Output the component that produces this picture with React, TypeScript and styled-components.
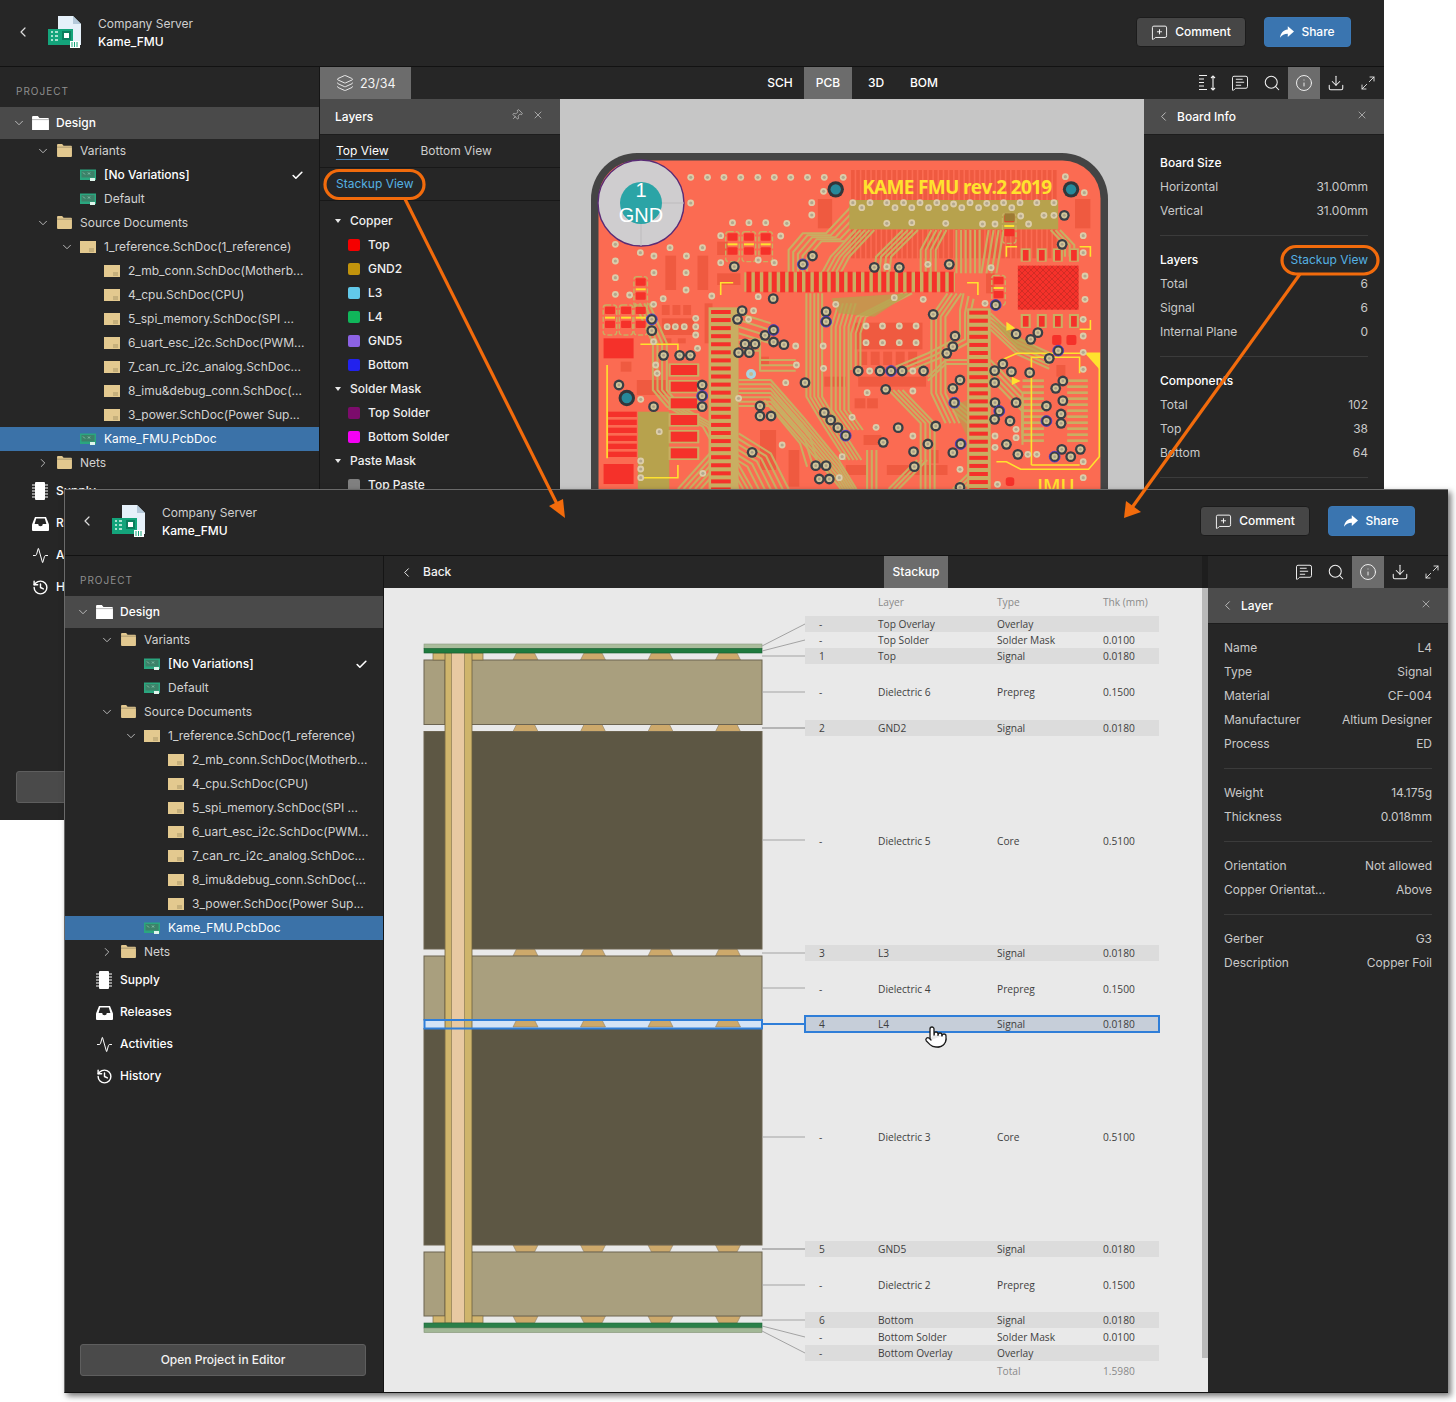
import React from 'react';
import styled, { createGlobalStyle } from 'styled-components';
import {
  Activity,
  Check,
  ChevronDown,
  ChevronLeft,
  ChevronRight,
  Download,
  History,
  Info,
  Layers,
  Maximize2,
  MessageSquarePlus,
  MessageSquareText,
  Pin,
  Pointer,
  Search,
  X as CloseIcon,
} from 'lucide-react';

const GlobalStyle = createGlobalStyle`
  html, body { margin: 0; padding: 0; background: #fff; }
  body { font-family: Inter, "Liberation Sans", sans-serif; font-size: 12px; line-height: 13px; color: #d4d4d4; }
  * { box-sizing: border-box; }
`;

const Page = styled.div`
  position: relative;
  width: 1456px;
  height: 1402px;
  overflow: hidden;
  background: #fff;
`;

const Window = styled.div<{ $x: number; $y: number; $h: number; $raised?: boolean }>`
  position: absolute;
  left: ${(p) => p.$x}px;
  top: ${(p) => p.$y}px;
  width: 1384px;
  height: ${(p) => p.$h}px;
  display: flex;
  flex-direction: column;
  background: #262626;
  overflow: ${(p) => (p.$raised ? 'visible' : 'hidden')};
  box-shadow: ${(p) => (p.$raised ? '3px 3px 6px rgba(0,0,0,.55)' : 'none')};
  &::after {
    content: '';
    display: ${(p) => (p.$raised ? 'block' : 'none')};
    position: absolute;
    inset: 0;
    border-top: 1px solid #6a6a6a;
    border-left: 1px solid #6a6a6a;
    border-bottom: 1px solid #111;
    pointer-events: none;
  }
`;

/* row text sits a pixel above the icon centre line */
const Label = styled.span`
  display: block;
  margin-bottom: 2px;
`;

const Header = styled.header`
  flex: 0 0 67px;
  display: flex;
  align-items: center;
  padding: 0 33px 2px 15px;
  background: #262626;
  border-bottom: 1px solid #121212;
`;

const BackBtn = styled.span`
  display: flex;
  width: 33px;
  color: #ddd;
`;

const ProjectTitle = styled.div`
  margin-left: 16px;
  margin-right: auto;
  display: flex;
  flex-direction: column;
  gap: 3px;
  line-height: 15px;
  font-size: 12px;
  color: #cfcfcf;
  b {
    color: #fff;
    font-weight: 500;
  }
`;

const HeaderButton = styled.button<{ $primary?: boolean }>`
  height: 30px;
  width: ${(p) => (p.$primary ? 87 : 110)}px;
  margin-left: ${(p) => (p.$primary ? 18 : 0)}px;
  display: flex;
  align-items: center;
  justify-content: center;
  gap: 7px;
  border-radius: 4px;
  border: 1px solid ${(p) => (p.$primary ? '#3b78b5' : '#1c1c1c')};
  background: ${(p) => (p.$primary ? '#3a75b0' : '#464646')};
  color: #fff;
  font: 500 12px/13px Inter, sans-serif;
`;

const Body = styled.div`
  flex: 1;
  min-height: 0;
  display: flex;
`;

const Sidebar = styled.aside`
  flex: 0 0 320px;
  width: 320px;
  min-width: 0;
  display: flex;
  flex-direction: column;
  border-right: 1px solid #151515;
  background: #262626;
`;

const SectionLabel = styled.div`
  height: 40px;
  padding: 18px 0 0 16px;
  font-size: 10px;
  line-height: 13px;
  letter-spacing: 1px;
  color: #8e8e8e;
`;

const TreeRow = styled.div<{ $depth: number; $top?: boolean; $selected?: boolean; $strong?: boolean }>`
  height: ${(p) => (p.$top ? 32 : 24)}px;
  padding-left: ${(p) => 8 + p.$depth * 24}px;
  padding-right: 15px;
  display: grid;
  grid-template-columns: 24px 24px 1fr auto;
  align-items: center;
  background: ${(p) => (p.$top ? '#4a4a4a' : p.$selected ? '#3b72a8' : 'transparent')};
  color: ${(p) => (p.$strong || p.$selected ? '#fff' : '#d2d2d2')};
  font-weight: ${(p) => (p.$strong ? 500 : 400)};
  font-size: 12px;
  white-space: nowrap;
`;

const ChevronSlot = styled.span`
  display: flex;
  align-items: center;
  padding-left: 4px;
  color: #c8c8c8;
`;

const Slot = styled.span<{ $inset?: boolean }>`
  display: flex;
  align-items: center;
  padding-left: ${(p) => (p.$inset ? 1 : 0)}px;
`;

const NavRow = styled.div`
  height: 32px;
  padding-left: 32px;
  display: grid;
  grid-template-columns: 24px 1fr;
  align-items: center;
  color: #fff;
  font-weight: 500;
  font-size: 12px;
`;

const OpenButton = styled.button`
  margin: auto 17px 17px 16px;
  height: 32px;
  flex: 0 0 32px;
  padding: 0 0 2px;
  border-radius: 3px;
  border: 1px solid #5e5e5e;
  background: #4a4a4a;
  color: #f2f2f2;
  font: 500 12px/13px Inter, sans-serif;
`;

const Main = styled.div`
  flex: 1;
  min-width: 0;
  display: flex;
  flex-direction: column;
`;

const Toolbar = styled.div`
  flex: 0 0 32px;
  display: grid;
  grid-template-columns: 1fr auto 1fr;
  background: #262626;
`;

const CountTab = styled.div`
  width: 91px;
  display: flex;
  align-items: center;
  gap: 6px;
  padding-left: 16px;
  background: #6c6c6c;
  color: #f4f4f4;
  font-size: 12.5px;
`;

const ViewTabs = styled.div`
  display: flex;
`;

const ViewTab = styled.div<{ $active?: boolean }>`
  width: 48px;
  display: flex;
  align-items: center;
  justify-content: center;
  padding-bottom: 2px;
  font-size: 12px;
  font-weight: 500;
  color: #fff;
  background: ${(p) => (p.$active ? '#6c6c6c' : 'transparent')};
`;

const ToolIcons = styled.div`
  display: flex;
  justify-content: flex-end;
  height: 32px;
  flex: 0 0 32px;
`;

const ToolIcon = styled.span<{ $active?: boolean }>`
  width: 32px;
  display: flex;
  align-items: center;
  justify-content: center;
  color: #f0f0f0;
  background: ${(p) => (p.$active ? '#6c6c6c' : 'transparent')};
`;

const Workspace = styled.div`
  flex: 1;
  min-height: 0;
  display: flex;
`;

const Panel = styled.section`
  flex: 0 0 240px;
  width: 240px;
  display: flex;
  flex-direction: column;
  background: #262626;
`;

const PanelHeader = styled.div`
  flex: 0 0 36px;
  display: flex;
  align-items: center;
  padding: 0 16px;
  background: #4c4c4c;
  border-bottom: 1px solid #1d1d1d;
  color: #fff;
  font-size: 12px;
  font-weight: 500;
`;

const PanelTitle = styled.span<{ $indent?: boolean }>`
  margin-left: ${(p) => (p.$indent ? 6 : -1)}px;
`;

const HeaderSpacer = styled.span`
  flex: 1;
`;

const HeaderIcon = styled.span<{ $back?: boolean; $gap?: boolean }>`
  display: flex;
  color: #d4d4d4;
  margin-left: ${(p) => (p.$back ? -4 : 0)}px;
  margin-right: ${(p) => (p.$gap ? 9 : 0)}px;
  margin-bottom: ${(p) => (p.$back ? 0 : 3)}px;
  transform: ${(p) => (p.$gap ? 'rotate(45deg)' : 'none')};
`;

const PanelTabs = styled.div`
  height: 33px;
  display: flex;
  gap: 32px;
  padding: 0 16px;
  border-bottom: 1px solid #181818;
`;

const PanelTab = styled.div<{ $active?: boolean }>`
  height: 25px;
  padding-top: 8px;
  line-height: 15px;
  font-size: 12px;
  color: ${(p) => (p.$active ? '#fff' : '#cdcdcd')};
  border-bottom: 1px solid ${(p) => (p.$active ? '#4b86bd' : 'transparent')};
`;

const LinkRow = styled.div`
  height: 33px;
  display: flex;
  align-items: center;
  padding-left: 16px;
  border-bottom: 1px solid #181818;
`;

const Link = styled.span`
  display: block;
  margin-bottom: 2px;
  color: #55b1e2;
  font-size: 12px;
  font-weight: 400;
`;

const LayerList = styled.div`
  padding-top: 8px;
`;

const LayerGroup = styled.div`
  height: 24px;
  display: flex;
  align-items: center;
  padding-left: 15px;
  gap: 9px;
  color: #f0f0f0;
  font-size: 12px;
  font-weight: 500;
  &::before {
    content: '';
    border-left: 3px solid transparent;
    border-right: 3px solid transparent;
    border-top: 4px solid #e8e8e8;
  }
`;

const LayerItem = styled.div`
  height: 24px;
  display: flex;
  align-items: center;
  padding-left: 28px;
  gap: 8px;
  color: #f0f0f0;
  font-size: 12px;
  font-weight: 500;
`;

const Swatch = styled.span<{ $color: string }>`
  width: 12px;
  height: 12px;
  border-radius: 2px;
  background: ${(p) => p.$color};
`;

const Viewer = styled.div`
  flex: 1;
  min-width: 0;
  background: #c6c6c6;
  overflow: hidden;
`;

const InfoBody = styled.div<{ $top: number }>`
  padding: ${(p) => p.$top}px 16px 0;
`;

const InfoSection = styled.div<{ $plain?: boolean }>`
  padding: 12px 0;
  border-bottom: 1px solid ${(p) => (p.$plain ? 'transparent' : '#3b3b3b')};
`;

const InfoRow = styled.div<{ $head?: boolean }>`
  height: 24px;
  display: flex;
  align-items: center;
  justify-content: space-between;
  font-size: 12px;
  color: ${(p) => (p.$head ? '#fff' : '#c9c9c9')};
  font-weight: ${(p) => (p.$head ? 500 : 400)};
`;

const BackLabel = styled.div`
  display: flex;
  align-items: center;
  gap: 9px;
  padding-left: 15px;
  color: #f2f2f2;
  font-size: 12px;
  font-weight: 500;
`;

const StackupBar = styled.div`
  flex: 0 0 32px;
  display: flex;
  background: #262626;
  border-right: 6px solid #1e1e1e;
`;

const StackupTab = styled.div`
  margin-left: auto;
  margin-right: 254px;
  width: 64px;
  display: flex;
  align-items: center;
  justify-content: center;
  padding-bottom: 2px;
  background: #6c6c6c;
  color: #fff;
  font-size: 12px;
  font-weight: 500;
`;

const Canvas = styled.div`
  flex: 1;
  min-height: 0;
  display: flex;
  background: #e9e9e9;
`;

const ScrollTrack = styled.div`
  flex: 0 0 6px;
  margin-left: auto;
  height: 770px;
  background: #b9b9b9;
`;

const Table = styled.div`
  width: 354px;
  display: flex;
  flex-direction: column;
  font-family: "Open Sans", sans-serif;
  font-size: 10.2px;
  line-height: 14px;
  color: #3f3f3f;
`;

const Row = styled.div<{ $h: number; $shade?: boolean; $selected?: boolean; $muted?: boolean }>`
  height: ${(p) => p.$h}px;
  display: grid;
  grid-template-columns: 73px 119px 106px 1fr;
  align-items: center;
  background: ${(p) => (p.$selected ? '#c6ced9' : p.$shade ? '#dcdcdc' : 'transparent')};
  color: ${(p) => (p.$muted ? '#8a8a8a' : 'inherit')};
  outline: ${(p) => (p.$selected ? '2px solid #2f7ed8' : 'none')};
  outline-offset: -1px;
  span:first-child {
    padding-left: 14px;
  }
`;

const Annotations = styled.svg`
  position: absolute;
  left: 0;
  top: 0;
  pointer-events: none;
`;

const HandCursor = styled(Pointer)`
  position: absolute;
  left: 924px;
  top: 1025px;
  color: #1c1c1c;
  fill: #fff;
`;

/* icons */

const ProjectIcon = () => (
  <svg width="34" height="32" viewBox="0 0 34 32">
    <path d="M10 0h15l8 8v21H10z" fill="#e6f1fa" />
    <path d="M25 0l8 8h-8z" fill="#b4c9da" />
    <rect x="0" y="13" width="25" height="16" fill="#14a47b" />
    <rect x="22" y="25" width="10" height="7" fill="#fff" />
    <rect x="14" y="15" width="9" height="9" fill="#0b7f5e" />
    <rect x="16" y="17" width="5" height="5" fill="#fff" />
    <path d="M3 16h2M7 16h3M3 20h2M7 20h3M3 24h2M7 24h3" stroke="#d9f5ea" strokeWidth="1.6" />
    <path d="M24 26v5M26.5 26v5M29 26v5" stroke="#14a47b" strokeWidth="1" />
  </svg>
);

const FolderIcon = ({ color = '#e2c88f', w = 15 }: { color?: string; w?: number }) => (
  <svg width={w} height={w * 0.87} viewBox="0 0 16 14">
    <path d="M0 2.5V1a1 1 0 0 1 1-1h4.5L7 2h8a1 1 0 0 1 1 1v10a1 1 0 0 1-1 1H1a1 1 0 0 1-1-1z" fill={color} />
    <path d="M0 3.4h16" stroke="#262626" strokeWidth=".6" opacity=".5" />
  </svg>
);

const DocIcon = () => (
  <svg width="16" height="12" viewBox="0 0 16 12">
    <rect width="16" height="12" fill="#e3c98f" />
    <path d="M9 8h5M9 10h5" stroke="#9b8a5e" strokeWidth=".8" />
  </svg>
);

const BoardIcon = () => (
  <svg width="16" height="12" viewBox="0 0 16 12">
    <rect width="16" height="10.5" y=".5" fill="#2aa67f" />
    <rect x="1.5" y="2" width="13" height="6.5" fill="#3c8269" />
    <path d="M3 3.5l2 2M8 3.5l2 2M8 5.5l2-2" stroke="#9fd8c2" strokeWidth=".7" />
    <path d="M10 9h5v3h-5z" fill="#dff5ec" />
  </svg>
);

const ChipIcon = () => (
  <svg width="16" height="18" viewBox="0 0 16 18">
    <rect x="3" y="0" width="10" height="18" rx="1" fill="#fff" />
    <path d="M0 3h3M0 6h3M0 9h3M0 12h3M0 15h3M13 3h3M13 6h3M13 9h3M13 12h3M13 15h3" stroke="#fff" strokeWidth="1.2" />
  </svg>
);

const TrayIcon = () => (
  <svg width="17" height="15" viewBox="0 0 17 15">
    <path d="M0 8.5 3 1h11l3 7.5V14a1 1 0 0 1-1 1H1a1 1 0 0 1-1-1z" fill="#fff" />
    <path d="M2.6 8 4.2 2.6h8.6L14.4 8h-3.6a2.3 2.3 0 0 1-4.6 0z" fill="#262626" />
  </svg>
);

const ShareArrow = () => (
  <svg width="14" height="12" viewBox="3 4 18 15">
    <path d="M13 4v4.2C6.6 9 3.8 13.5 3 19c2.4-3.7 5.6-5.3 10-5.3V18l8-7z" fill="#fff" />
  </svg>
);

const MeasureIcon = () => (
  <svg width="18" height="16" viewBox="0 0 18 16" fill="none" stroke="#f2f2f2" strokeWidth="1.1">
    <path d="M0 .5h8M0 4h5M0 7.5h5M0 11h5M0 14.5h8" />
    <path d="M14 1v14M12 3l2-2 2 2M12 13l2 2 2-2" />
  </svg>
);

/* PCB artwork. Points were read off the reference at 2.8x / 3x scale */

const X = (x: number) => x / 2.8;
const Y = (y: number) => y / 3 - 39;

const TAN = '#c9ae62';
const OLIVE = '#b7a24d';
const SALMON = '#fb6b52';
const RED = '#f5312a';
const DIM = '#ef5a40';
const YELLOW = '#ffe22e';

const smallVias: number[][] = [
  [366, 352], [413, 352], [459, 352], [506, 352], [554, 352], [600, 352], [646, 352], [693, 352], [740, 352], [793, 352],
  [366, 429], [738, 394], [705, 428], [705, 465], [483, 488], [529, 488], [576, 488], [635, 490], [450, 527], [618, 528],
  [155, 553], [225, 578], [263, 588], [308, 563], [354, 588], [399, 563], [155, 603], [450, 608], [555, 600], [600, 608],
  [263, 638], [353, 638], [155, 653], [155, 703], [195, 705], [353, 690], [289, 716], [425, 708], [555, 710], [772, 733],
  [936, 713], [1017, 718], [1207, 623], [1190, 730], [1470, 648], [1470, 718], [1465, 778], [1465, 828], [1465, 877],
  [1465, 928], [1465, 527], [1465, 578], [1468, 398], [1415, 350], [262, 733], [380, 775], [380, 800], [380, 825],
  [300, 800], [323, 800], [348, 800], [262, 845], [385, 865], [737, 858], [857, 798], [903, 798], [950, 798], [997, 798],
  [857, 848], [903, 848], [950, 848], [997, 848], [542, 752], [528, 778], [660, 858], [662, 915], [738, 925], [867, 933],
  [988, 933], [860, 998], [988, 993], [632, 968], [268, 915], [272, 940], [226, 1018], [500, 1015], [278, 1115],
  [226, 1203], [226, 1227], [226, 1253], [400, 1240], [818, 1072], [885, 1102], [988, 1128], [1120, 1228], [1218, 1128],
  [1218, 1162], [1277, 1108], [1277, 1133], [1310, 1183], [1335, 1183], [1465, 1205], [1465, 1253], [1225, 1273],
  [790, 1190], [782, 1253], [622, 1155],
  [820, 428], [845, 443], [868, 428], [915, 428], [938, 443], [962, 428], [985, 443], [1008, 428], [1032, 443],
  [1055, 428], [1078, 443], [1102, 432], [1125, 443], [1148, 428], [1172, 443], [1195, 430], [1218, 443], [1242, 428],
  [1265, 443], [1288, 428], [1335, 428], [1383, 428], [915, 490], [985, 488], [1080, 490], [1183, 492], [1218, 492],
  [1312, 492], [1290, 468], [1355, 466], [1383, 466], [1030, 613], [915, 620],
];

const darkVias: number[][] = [
  [257, 778], [257, 812], [290, 886], [335, 886], [365, 886], [165, 975], [398, 975], [398, 1008], [398, 1040],
  [262, 1040], [510, 752], [497, 778], [597, 716], [574, 826], [598, 810], [598, 846], [627, 854], [518, 852], [546, 852],
  [500, 878], [530, 878], [680, 613], [707, 588], [488, 620], [880, 622], [950, 622], [1090, 613], [745, 755], [745, 785],
  [1045, 763], [1106, 828], [1100, 860], [1083, 880], [835, 933], [896, 933], [927, 933], [958, 933], [1018, 933],
  [912, 988], [686, 968], [1120, 960], [1100, 985], [1104, 1028], [560, 1038], [560, 1068], [591, 1068], [740, 1058],
  [758, 1080], [778, 1103], [800, 1127], [947, 1103], [905, 1147], [1052, 1098], [1030, 1152], [990, 1175], [992, 1220],
  [1122, 1152], [1100, 1178], [716, 1217], [745, 1217], [726, 1257], [754, 1257], [538, 1177], [1220, 735], [1240, 912],
  [1217, 932], [1264, 935], [1217, 968], [1315, 938], [1218, 1028], [1230, 1053], [1217, 1078], [1260, 1083], [1277, 1028],
  [1250, 1153], [1282, 1183], [1362, 1038], [1362, 1083], [1408, 963], [1388, 985], [1408, 1022], [1403, 1062], [1403, 1090],
  [1405, 1168], [1385, 1190], [1430, 1190], [1457, 1168], [1277, 822], [1318, 838], [1338, 818], [1370, 895], [1395, 872],
  [1412, 466], [1406, 553], [1120, 1282],
];

const dimBlocks: number[][] = [
  [722, 417, 40, 88], [1442, 417, 43, 88], [295, 587, 30, 103], [385, 587, 30, 103], [440, 545, 30, 40], [440, 640, 65, 35],
  [1193, 640, 24, 60], [215, 960, 85, 45], [170, 905, 30, 30], [825, 788, 190, 80], [835, 875, 25, 40], [870, 875, 25, 40],
  [905, 875, 25, 40], [940, 875, 25, 40], [975, 875, 25, 40], [740, 950, 60, 30], [835, 950, 190, 30], [825, 1015, 30, 30],
  [860, 1015, 30, 30], [285, 735, 22, 30], [315, 735, 22, 30], [345, 735, 22, 30], [285, 775, 90, 50], [290, 835, 22, 15],
  [330, 835, 22, 15], [405, 730, 22, 120], [560, 890, 25, 25], [560, 1110, 45, 120], [640, 1170, 30, 110], [850, 1125, 50, 30],
  [1040, 1170, 20, 40], [915, 1215, 170, 30], [800, 1215, 60, 30], [1390, 915, 25, 35], [1150, 1000, 50, 30],
];

const bundles: { pts: number[][]; n: number; d: number[] }[] = [
  { pts: [[815, 440], [745, 520], [680, 520], [640, 570], [640, 640]], n: 5, d: [13, 6] },
  { pts: [[880, 510], [810, 590], [785, 640]], n: 5, d: [-13, 0] },
  { pts: [[960, 510], [885, 590], [880, 640]], n: 4, d: [14, 0] },
  { pts: [[1040, 510], [1010, 570], [1010, 640]], n: 4, d: [14, 0] },
  { pts: [[1110, 510], [1110, 640]], n: 6, d: [13, 0] },
  { pts: [[1200, 510], [1180, 640]], n: 4, d: [14, 0] },
  { pts: [[1400, 510], [1440, 555], [1440, 590]], n: 3, d: [-13, 0] },
  { pts: [[690, 700], [690, 1010], [740, 1100], [800, 1200]], n: 5, d: [11, 0] },
  { pts: [[780, 730], [760, 800], [760, 1050], [800, 1110]], n: 5, d: [12, 0] },
  { pts: [[960, 700], [830, 770], [815, 820], [815, 930]], n: 3, d: [13, 0] },
  { pts: [[1085, 700], [1040, 770], [1040, 1000], [1080, 1090]], n: 4, d: [13, 0] },
  { pts: [[1130, 700], [1120, 750], [1120, 830], [1030, 880], [940, 920]], n: 3, d: [14, 8] },
  { pts: [[500, 960], [590, 960], [680, 1070], [780, 1200], [830, 1287]], n: 7, d: [0, 13] },
  { pts: [[500, 760], [590, 790]], n: 4, d: [0, 20] },
  { pts: [[500, 840], [560, 840], [560, 900], [660, 900]], n: 3, d: [0, 16] },
  { pts: [[500, 1120], [590, 1180], [640, 1287]], n: 6, d: [-13, 8] },
  { pts: [[1205, 760], [1280, 835], [1370, 878]], n: 5, d: [0, 12] },
  { pts: [[1205, 900], [1295, 1000], [1295, 1100]], n: 4, d: [0, 18] },
  { pts: [[920, 990], [1010, 1090], [1010, 1287]], n: 4, d: [13, 0] },
  { pts: [[210, 730], [260, 850], [260, 990], [300, 1040], [400, 1100], [500, 1287]], n: 4, d: [13, 0] },
  { pts: [[1100, 1010], [1200, 1100]], n: 4, d: [0, 14] },
  { pts: [[1145, 1240], [1100, 1287]], n: 3, d: [0, 14] },
  { pts: [[330, 1287], [420, 1180]], n: 5, d: [16, 0] },
  { pts: [[860, 1170], [860, 1287]], n: 3, d: [13, 0] },
  { pts: [[600, 1000], [700, 1130], [720, 1200]], n: 3, d: [-14, 10] },
  { pts: [[1000, 1200], [920, 1287]], n: 3, d: [14, 0] },
  { pts: [[1140, 900], [1080, 900], [1030, 950]], n: 2, d: [0, 12] },
];

const yellowLines: string[] = [
  '450,705 450,668 485,668',
  '1140,668 1170,668 1170,705',
  '1250,590 1250,560 1280,560',
  '1455,560 1485,560 1485,590',
  '1455,808 1485,808 1485,780',
  '225,853 330,853 330,880',
  '132,915 132,1195',
  '235,1253 330,1253 330,1215',
  '1225,905 1280,880 1510,880 1510,1190 1480,1228 1320,1228 1290,1228 1250,1205 1222,1205',
  '1320,1215 1320,892 1455,892 1455,940',
  '1320,1215 1455,1215',
];

const path = (pts: number[][], dx = 0, dy = 0) =>
  pts.map((p) => `${X(p[0] + dx).toFixed(1)},${Y(p[1] + dy).toFixed(1)}`).join(' ');

const range = (from: number, to: number, step: number) => {
  const out: number[] = [];
  for (let v = from; v < to; v += step) out.push(v);
  return out;
};

const Box = ({ r, fill, rx = 0 }: { r: number[]; fill: string; rx?: number }) => (
  <rect x={X(r[0])} y={Y(r[1])} width={r[2] / 2.8} height={r[3] / 3} fill={fill} rx={rx} />
);

const SmallPart = ({ x, y }: { x: number; y: number }) => (
  <g>
    <rect x={X(x - 19)} y={Y(y - 30)} width={13.5} height={30} rx={3} fill="none" stroke={TAN} strokeWidth="1.4" strokeDasharray="5 2" />
    <Box r={[x - 14, y - 25, 28, 22]} fill={RED} rx={1} />
    <Box r={[x - 14, y + 17, 28, 22]} fill={RED} rx={1} />
    <Box r={[x - 14, y + 5, 28, 6]} fill={YELLOW} />
  </g>
);

const PcbArt = () => (
  <svg width="584" height="390" viewBox="0 0 584 390">
    <defs>
      <pattern id="hatch" width="6" height="6" patternUnits="userSpaceOnUse">
        <path d="M0 0l6 6M6 0l-6 6" stroke="#b82a22" strokeWidth=".6" />
      </pattern>
    </defs>
    <rect x="31" y="54" width="517" height="400" rx="46" fill="#444" />
    <rect x="38.5" y="61.5" width="502" height="400" rx="38" fill={SALMON} />

    {range(815, 1390, 14.5).map((x) => (
      <Box key={x} r={[x, 330, 10, 90]} fill={DIM} />
    ))}
    {range(815, 1390, 14.5).map((x) => (
      <Box key={x} r={[x, 508, 10, 87]} fill={DIM} />
    ))}
    {dimBlocks.map((b) => (
      <Box key={b.join()} r={b} fill={DIM} />
    ))}
    {range(1055, 1195, 24).map((y) => (
      <Box key={y} r={[135, y, 80, 16]} fill={RED} />
    ))}

    <g fill="none" stroke={TAN} strokeWidth="2.1" strokeLinejoin="round">
      {bundles.map((b) =>
        range(0, b.n, 1).map((i) => (
          <polyline key={`${b.pts[0].join()}-${i}`} points={path(b.pts, b.d[0] * i, b.d[1] * i)} />
        ))
      )}
    </g>

    <Box r={[810, 420, 585, 88]} fill={OLIVE} />
    <Box r={[218, 1055, 88, 235]} fill={OLIVE} />
    <polygon points={path([[760, 715], [980, 700], [880, 770], [780, 760]])} fill={OLIVE} opacity=".75" />
    <polygon points={path([[1100, 1040], [1140, 1020], [1200, 1100], [1140, 1130]])} fill={OLIVE} opacity=".6" />
    <polygon points={path([[1210, 780], [1260, 810], [1360, 880], [1290, 880]])} fill={OLIVE} opacity=".7" />

    <Box r={[516, 637, 590, 58]} fill={TAN} />
    {range(522, 1098, 23.6).map((x) => (
      <Box key={x} r={[x, 635, 14, 62]} fill={RED} />
    ))}

    <Box r={[416, 742, 84, 545]} fill={TAN} />
    {range(750, 1287, 24.2).map((y) => (
      <Box key={y} r={[423, y, 55, 12]} fill={RED} />
    ))}
    <Box r={[1140, 745, 66, 545]} fill={TAN} />
    {range(752, 1287, 24.2).map((y) => (
      <Box key={y} r={[1146, y, 52, 12]} fill={RED} />
    ))}

    {range(958, 1155, 18).map((y) => (
      <g key={y}>
        <Box r={[1295, y, 60, 8]} fill={TAN} />
        <Box r={[1420, y, 58, 8]} fill={TAN} />
      </g>
    ))}

    {[1290, 1335, 1380, 1425].map((x) => (
      <g key={x}>
        <Box r={[x, 565, 28, 40]} fill={TAN} />
        <Box r={[x + 6, 570, 16, 32]} fill={RED} />
        <Box r={[x, 762, 28, 42]} fill={TAN} />
        <Box r={[x + 6, 768, 16, 32]} fill={RED} />
      </g>
    ))}

    <Box r={[1282, 617, 170, 132]} fill={RED} />
    <Box r={[1282, 617, 170, 132]} fill="url(#hatch)" />

    {[483, 529, 576].map((x) => (
      <SmallPart key={x} x={x} y={545} />
    ))}
    <SmallPart x={226} y={680} />
    <SmallPart x={1228} y={676} />
    <SmallPart x={1258} y={490} />
    {[140, 185, 226].map((x) => (
      <SmallPart key={x} x={x} y={765} />
    ))}

    {[[122, 835], [122, 1212]].map((p) => (
      <Box key={p[1]} r={[p[0], p[1], 84, 60]} fill={RED} />
    ))}
    {range(915, 1200, 50).map((y) => (
      <g key={y}>
        <Box r={[304, y - 5, 86, 40]} fill={TAN} />
        <Box r={[310, y, 74, 30]} fill={RED} />
      </g>
    ))}
    <Box r={[1378, 825, 26, 30]} fill={RED} rx={2} />
    <Box r={[1418, 825, 28, 30]} fill={RED} rx={2} />
    <Box r={[1248, 1252, 24, 26]} fill={RED} rx={3} />
    <Box r={[1245, 460, 28, 24]} fill="#9d7a34" />

    <g fill="none" stroke={YELLOW} strokeWidth="1.6">
      {yellowLines.map((l) => (
        <polyline key={l} points={path(l.split(' ').map((p) => p.split(',').map(Number)))} />
      ))}
    </g>
    <polygon points={path([[1470, 880], [1512, 880], [1512, 930]])} fill={YELLOW} />
    <polygon points={path([[1250, 785], [1250, 812], [1275, 805]])} fill={YELLOW} />
    <polygon points={path([[1265, 950], [1265, 975], [1290, 963]])} fill={YELLOW} />

    {smallVias.map((v) => (
      <g key={v.join()}>
        <circle cx={X(v[0])} cy={Y(v[1])} r="3.4" fill="#dccdaa" />
        <circle cx={X(v[0])} cy={Y(v[1])} r="1.6" fill="#b3a88e" />
      </g>
    ))}
    {darkVias.map((v, i) => (
      <g key={v.join()}>
        <circle cx={X(v[0])} cy={Y(v[1])} r="5.4" fill="#3a3f46" stroke={i % 7 === 0 ? '#3b39d8' : 'none'} strokeWidth=".8" />
        <circle cx={X(v[0])} cy={Y(v[1])} r="3.1" fill="#d2c597" />
        <circle cx={X(v[0])} cy={Y(v[1])} r="1.4" fill="#a8a08a" />
      </g>
    ))}
    <circle cx={X(535)} cy={Y(942)} r="5" fill="#a7d3e0" />
    <circle cx={X(535)} cy={Y(942)} r="2" fill="#c7b98f" />
    {[[772, 388], [1431, 388], [187, 1014]].map((v) => (
      <g key={v[0]}>
        <circle cx={X(v[0])} cy={Y(v[1])} r="8.2" fill="#33363a" />
        <circle cx={X(v[0])} cy={Y(v[1])} r="5.2" fill="#27899a" />
      </g>
    ))}

    <text x={X(846)} y={Y(402)} fill={YELLOW} fontFamily="Open Sans, sans-serif" fontWeight="700" fontSize="19" textLength="190">
      KAME FMU rev.2 2019
    </text>
    <text x={X(1336)} y={Y(1298)} fill={YELLOW} fontFamily="Open Sans, sans-serif" fontWeight="600" fontSize="19">
      IMU
    </text>

    <circle cx="81" cy="104" r="43" fill="#cfcdcf" stroke="#5a2c76" strokeWidth="1.4" />
    <path d="M81 104v43M81 104h43" stroke="#bdbbbd" strokeWidth="1" />
    <circle cx="81" cy="104" r="21" fill="#2ba4a6" />
    <text x="81" y="98" fill="#fff" textAnchor="middle" fontFamily="Liberation Sans, sans-serif" fontSize="20">1</text>
    <text x="81" y="123" fill="#fff" textAnchor="middle" fontFamily="Liberation Sans, sans-serif" fontSize="20">GND</text>
  </svg>
);

/* stackup cross section, in page coordinates */

const gaps = [
  { y: 653, wideTop: false },
  { y: 724.5, wideTop: false },
  { y: 949, wideTop: false },
  { y: 1020, wideTop: false },
  { y: 1245, wideTop: true },
  { y: 1316, wideTop: true },
];

const slabs = [
  { y: 660, h: 64.5, fill: '#a99f7e' },
  { y: 731.5, h: 217.5, fill: '#5d5744' },
  { y: 956, h: 64, fill: '#a99f7e' },
  { y: 1028.5, h: 216.5, fill: '#5d5744' },
  { y: 1252, h: 64, fill: '#a99f7e' },
];

const leaders: { from: number; to: number; heavy?: boolean }[] = [
  { from: 646, to: 624 },
  { from: 651, to: 640 },
  { from: 656, to: 656 },
  { from: 692, to: 692 },
  { from: 728, to: 728, heavy: true },
  { from: 840, to: 840 },
  { from: 953, to: 953 },
  { from: 988, to: 988 },
  { from: 1137, to: 1137 },
  { from: 1249, to: 1249, heavy: true },
  { from: 1285, to: 1285 },
  { from: 1320, to: 1320 },
  { from: 1326, to: 1337 },
  { from: 1331, to: 1353 },
];

const StackupArt = () => (
  <svg width="421" height="805" viewBox="384 588 421 805">
    <rect x="424" y="1020" width="338" height="8.5" fill="#d3e3f6" />
    {gaps.map((g) =>
      [525.5, 593, 660.5, 728].map((cx) => (
        <polygon
          key={`${g.y}-${cx}`}
          points={
            g.wideTop
              ? `${cx - 12.5},${g.y} ${cx + 12.5},${g.y} ${cx + 9},${g.y + 7} ${cx - 9},${g.y + 7}`
              : `${cx - 9},${g.y} ${cx + 9},${g.y} ${cx + 12.5},${g.y + 7} ${cx - 12.5},${g.y + 7}`
          }
          fill="#cda96b"
          stroke="#8d8064"
          strokeWidth=".6"
        />
      ))
    )}
    {slabs.map((s) => (
      <g key={s.y}>
        <rect x="424" y={s.y} width="21" height={s.h} fill={s.fill} stroke="#6c6451" strokeWidth="1" />
        <rect x="471.5" y={s.y} width="290.5" height={s.h} fill={s.fill} stroke="#6c6451" strokeWidth="1" />
      </g>
    ))}
    <rect x="433" y="653" width="50" height="7" fill="#d2b56f" stroke="#7a6c47" strokeWidth=".7" />
    <rect x="433" y="1316" width="50" height="7" fill="#d2b56f" stroke="#7a6c47" strokeWidth=".7" />
    <rect x="445" y="653" width="27" height="670" fill="#cfb56c" stroke="#6d6040" strokeWidth=".8" />
    <rect x="451.5" y="653" width="13" height="670" fill="#e8c9a2" stroke="#6d6040" strokeWidth=".5" />

    <rect x="424" y="644" width="338" height="4.5" fill="#aabd9c" stroke="#8c9c80" strokeWidth=".6" />
    <rect x="424" y="648.5" width="338" height="4.5" fill="#1f7a3e" stroke="#176030" strokeWidth=".6" />
    <rect x="424" y="1323" width="338" height="5" fill="#2b7f49" stroke="#1f6a3a" strokeWidth=".6" />
    <rect x="424" y="1328" width="338" height="4.5" fill="#a2b796" stroke="#7f8f72" strokeWidth=".6" />

    <rect x="424.5" y="1020" width="337.5" height="8.5" fill="none" stroke="#2f7ed8" strokeWidth="2" />
    <path d="M762 1024h43" stroke="#2f7ed8" strokeWidth="2" />

    {leaders.map((l) => (
      <line key={l.to} x1="762" y1={l.from} x2="805" y2={l.to} stroke="#a3a3a3" strokeWidth={l.heavy ? 1.6 : 1} />
    ))}
  </svg>
);

/* data */

type TreeItem = {
  label: string;
  depth: number;
  icon: 'folder' | 'doc' | 'board';
  chevron?: 'down' | 'right';
  strong?: boolean;
  checked?: boolean;
  selected?: boolean;
};

const tree: TreeItem[] = [
  { label: 'Variants', depth: 1, icon: 'folder', chevron: 'down' },
  { label: '[No Variations]', depth: 2, icon: 'board', strong: true, checked: true },
  { label: 'Default', depth: 2, icon: 'board' },
  { label: 'Source Documents', depth: 1, icon: 'folder', chevron: 'down' },
  { label: '1_reference.SchDoc(1_reference)', depth: 2, icon: 'doc', chevron: 'down' },
  { label: '2_mb_conn.SchDoc(Motherb...', depth: 3, icon: 'doc' },
  { label: '4_cpu.SchDoc(CPU)', depth: 3, icon: 'doc' },
  { label: '5_spi_memory.SchDoc(SPI ...', depth: 3, icon: 'doc' },
  { label: '6_uart_esc_i2c.SchDoc(PWM...', depth: 3, icon: 'doc' },
  { label: '7_can_rc_i2c_analog.SchDoc...', depth: 3, icon: 'doc' },
  { label: '8_imu&debug_conn.SchDoc(...', depth: 3, icon: 'doc' },
  { label: '3_power.SchDoc(Power Sup...', depth: 3, icon: 'doc' },
  { label: 'Kame_FMU.PcbDoc', depth: 2, icon: 'board', selected: true },
  { label: 'Nets', depth: 1, icon: 'folder', chevron: 'right' },
];

const layerGroups = [
  {
    name: 'Copper',
    items: [
      ['Top', '#f50000'],
      ['GND2', '#c1930c'],
      ['L3', '#62c9ea'],
      ['L4', '#10b65a'],
      ['GND5', '#8c62e4'],
      ['Bottom', '#2222ee'],
    ],
  },
  {
    name: 'Solder Mask',
    items: [
      ['Top Solder', '#7c0c6c'],
      ['Bottom Solder', '#f400f4'],
    ],
  },
  { name: 'Paste Mask', items: [['Top Paste', '#808080']] },
];

const boardInfo = [
  {
    head: 'Board Size',
    rows: [
      ['Horizontal', '31.00mm'],
      ['Vertical', '31.00mm'],
    ],
  },
  {
    head: 'Layers',
    link: true,
    rows: [
      ['Total', '6'],
      ['Signal', '6'],
      ['Internal Plane', '0'],
    ],
  },
  {
    head: 'Components',
    rows: [
      ['Total', '102'],
      ['Top', '38'],
      ['Bottom', '64'],
    ],
  },
];

const layerInfo = [
  [
    ['Name', 'L4'],
    ['Type', 'Signal'],
    ['Material', 'CF-004'],
    ['Manufacturer', 'Altium Designer'],
    ['Process', 'ED'],
  ],
  [
    ['Weight', '14.175g'],
    ['Thickness', '0.018mm'],
  ],
  [
    ['Orientation', 'Not allowed'],
    ['Copper Orientat...', 'Above'],
  ],
  [
    ['Gerber', 'G3'],
    ['Description', 'Copper Foil'],
  ],
];

const stack: { n?: string; layer?: string; type?: string; thk?: string; h: number; shade?: boolean; selected?: boolean; muted?: boolean }[] = [
  { layer: 'Layer', type: 'Type', thk: 'Thk (mm)', h: 28, muted: true },
  { n: '-', layer: 'Top Overlay', type: 'Overlay', h: 16, shade: true },
  { n: '-', layer: 'Top Solder', type: 'Solder Mask', thk: '0.0100', h: 16 },
  { n: '1', layer: 'Top', type: 'Signal', thk: '0.0180', h: 16, shade: true },
  { n: '-', layer: 'Dielectric 6', type: 'Prepreg', thk: '0.1500', h: 56 },
  { n: '2', layer: 'GND2', type: 'Signal', thk: '0.0180', h: 16, shade: true },
  { n: '-', layer: 'Dielectric 5', type: 'Core', thk: '0.5100', h: 209 },
  { n: '3', layer: 'L3', type: 'Signal', thk: '0.0180', h: 16, shade: true },
  { n: '-', layer: 'Dielectric 4', type: 'Prepreg', thk: '0.1500', h: 55 },
  { n: '4', layer: 'L4', type: 'Signal', thk: '0.0180', h: 16, selected: true },
  { n: '-', layer: 'Dielectric 3', type: 'Core', thk: '0.5100', h: 209 },
  { n: '5', layer: 'GND5', type: 'Signal', thk: '0.0180', h: 16, shade: true },
  { n: '-', layer: 'Dielectric 2', type: 'Prepreg', thk: '0.1500', h: 55 },
  { n: '6', layer: 'Bottom', type: 'Signal', thk: '0.0180', h: 16, shade: true },
  { n: '-', layer: 'Bottom Solder', type: 'Solder Mask', thk: '0.0100', h: 17 },
  { n: '-', layer: 'Bottom Overlay', type: 'Overlay', h: 16, shade: true },
  { type: 'Total', thk: '1.5980', h: 20, muted: true },
];

/* shared parts */

const WindowHeader = () => (
  <Header>
    <BackBtn>
      <ChevronLeft size={16} strokeWidth={1.8} />
    </BackBtn>
    <ProjectIcon />
    <ProjectTitle>
      <span>Company Server</span>
      <b>Kame_FMU</b>
    </ProjectTitle>
    <HeaderButton>
      <MessageSquarePlus size={17} strokeWidth={1.3} />
      <Label>Comment</Label>
    </HeaderButton>
    <HeaderButton $primary>
      <ShareArrow />
      <Label>Share</Label>
    </HeaderButton>
  </Header>
);

const treeIcon = (item: TreeItem) => {
  if (item.icon === 'folder') return <FolderIcon />;
  if (item.icon === 'doc') return <DocIcon />;
  return <BoardIcon />;
};

const ProjectSidebar = () => (
  <Sidebar>
    <SectionLabel>PROJECT</SectionLabel>
    <TreeRow $depth={0} $top $strong>
      <ChevronSlot>
        <ChevronDown size={14} strokeWidth={1.5} />
      </ChevronSlot>
      <Slot>
        <FolderIcon color="#fff" w={17} />
      </Slot>
      <Label>Design</Label>
    </TreeRow>
    {tree.map((item) => (
      <TreeRow key={item.label} $depth={item.depth} $strong={item.strong} $selected={item.selected}>
        <ChevronSlot>
          {item.chevron === 'down' && <ChevronDown size={14} strokeWidth={1.5} />}
          {item.chevron === 'right' && <ChevronRight size={14} strokeWidth={1.5} />}
        </ChevronSlot>
        <Slot $inset={item.icon === 'folder'}>{treeIcon(item)}</Slot>
        <Label>{item.label}</Label>
        {item.checked && <Check size={13} strokeWidth={3} color="#fff" />}
      </TreeRow>
    ))}
    <NavRow>
      <ChipIcon />
      <Label>Supply</Label>
    </NavRow>
    <NavRow>
      <TrayIcon />
      <Label>Releases</Label>
    </NavRow>
    <NavRow>
      <Activity size={17} strokeWidth={1.4} />
      <Label>Activities</Label>
    </NavRow>
    <NavRow>
      <History size={17} strokeWidth={2} />
      <Label>History</Label>
    </NavRow>
    <OpenButton>Open Project in Editor</OpenButton>
  </Sidebar>
);

const ToolSet = ({ measure }: { measure?: boolean }) => (
  <ToolIcons>
    {measure && (
      <ToolIcon>
        <MeasureIcon />
      </ToolIcon>
    )}
    <ToolIcon>
      <MessageSquareText size={18} strokeWidth={1.3} />
    </ToolIcon>
    <ToolIcon>
      <Search size={18} strokeWidth={1.4} />
    </ToolIcon>
    <ToolIcon $active>
      <Info size={18} strokeWidth={1.3} />
    </ToolIcon>
    <ToolIcon>
      <Download size={18} strokeWidth={1.4} />
    </ToolIcon>
    <ToolIcon>
      <Maximize2 size={16} strokeWidth={1.3} />
    </ToolIcon>
  </ToolIcons>
);

const DetailHeader = ({ title }: { title: string }) => (
  <PanelHeader>
    <HeaderIcon $back>
      <ChevronLeft size={15} strokeWidth={1.3} />
    </HeaderIcon>
    <PanelTitle $indent>{title}</PanelTitle>
    <HeaderSpacer />
    <HeaderIcon>
      <CloseIcon size={12} strokeWidth={1.3} />
    </HeaderIcon>
  </PanelHeader>
);

const App: React.FC = () => (
  <Page>
    <GlobalStyle />

    <Window $x={0} $y={0} $h={820}>
      <WindowHeader />
      <Body>
        <ProjectSidebar />
        <Main>
          <Toolbar>
            <CountTab>
              <Layers size={18} strokeWidth={1.2} />
              23/34
            </CountTab>
            <ViewTabs>
              <ViewTab>SCH</ViewTab>
              <ViewTab $active>PCB</ViewTab>
              <ViewTab>3D</ViewTab>
              <ViewTab>BOM</ViewTab>
            </ViewTabs>
            <ToolSet measure />
          </Toolbar>
          <Workspace>
            <Panel>
              <PanelHeader>
                <PanelTitle>Layers</PanelTitle>
                <HeaderSpacer />
                <HeaderIcon $gap>
                  <Pin size={12} strokeWidth={1.3} />
                </HeaderIcon>
                <HeaderIcon>
                  <CloseIcon size={12} strokeWidth={1.3} />
                </HeaderIcon>
              </PanelHeader>
              <PanelTabs>
                <PanelTab $active>Top View</PanelTab>
                <PanelTab>Bottom View</PanelTab>
              </PanelTabs>
              <LinkRow>
                <Link>Stackup View</Link>
              </LinkRow>
              <LayerList>
                {layerGroups.map((g) => (
                  <React.Fragment key={g.name}>
                    <LayerGroup>
                      <Label>{g.name}</Label>
                    </LayerGroup>
                    {g.items.map(([name, color]) => (
                      <LayerItem key={name}>
                        <Swatch $color={color} />
                        <Label>{name}</Label>
                      </LayerItem>
                    ))}
                  </React.Fragment>
                ))}
              </LayerList>
            </Panel>
            <Viewer>
              <PcbArt />
            </Viewer>
            <Panel>
              <DetailHeader title="Board Info" />
              <InfoBody $top={4}>
                {boardInfo.map((s) => (
                  <InfoSection key={s.head}>
                    <InfoRow $head>
                      <Label>{s.head}</Label>
                      {s.link && <Link>Stackup View</Link>}
                    </InfoRow>
                    {s.rows.map(([k, v]) => (
                      <InfoRow key={k}>
                        <Label>{k}</Label>
                        <Label>{v}</Label>
                      </InfoRow>
                    ))}
                  </InfoSection>
                ))}
              </InfoBody>
            </Panel>
          </Workspace>
        </Main>
      </Body>
    </Window>

    <Window $x={64} $y={489} $h={904} $raised>
      <WindowHeader />
      <Body>
        <ProjectSidebar />
        <Main>
          <StackupBar>
            <BackLabel>
              <ChevronLeft size={15} strokeWidth={1.5} />
              <Label>Back</Label>
            </BackLabel>
            <StackupTab>Stackup</StackupTab>
          </StackupBar>
          <Canvas>
            <StackupArt />
            <Table>
              {stack.map((r, i) => (
                <Row key={i} $h={r.h} $shade={r.shade} $selected={r.selected} $muted={r.muted}>
                  <span>{r.n}</span>
                  <span>{r.layer}</span>
                  <span>{r.type}</span>
                  <span>{r.thk}</span>
                </Row>
              ))}
            </Table>
            <ScrollTrack />
          </Canvas>
        </Main>
        <Panel>
          <ToolSet />
          <DetailHeader title="Layer" />
          <InfoBody $top={0}>
            {layerInfo.map((rows, i) => (
              <InfoSection key={rows[0][0]} $plain={i === layerInfo.length - 1}>
                {rows.map(([k, v]) => (
                  <InfoRow key={k}>
                    <Label>{k}</Label>
                    <Label>{v}</Label>
                  </InfoRow>
                ))}
              </InfoSection>
            ))}
          </InfoBody>
        </Panel>
      </Body>
    </Window>

    <Annotations width="1456" height="1402" viewBox="0 0 1456 1402">
      <g fill="none" stroke="#f26b0c" strokeWidth="3.2">
        <rect x="325" y="170.5" width="99" height="28" rx="14" />
        <rect x="1282" y="246.5" width="96" height="27.5" rx="14" />
        <path d="M405 199L558 506" />
        <path d="M1300 274L1131 509" />
      </g>
      <polygon points="565,518 549,506 563,499" fill="#f26b0c" />
      <polygon points="1124,518 1126,501 1141,512" fill="#f26b0c" />
    </Annotations>
    <HandCursor size={24} strokeWidth={1.3} />
  </Page>
);

export default App;
